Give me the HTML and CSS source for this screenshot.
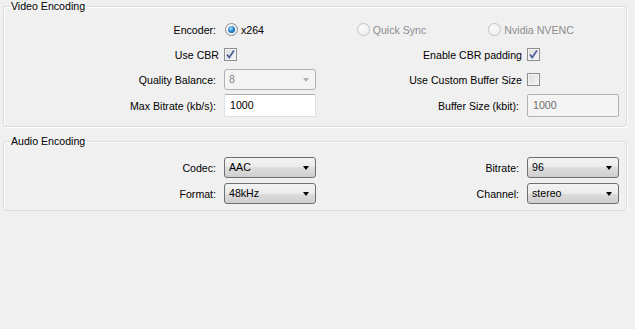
FILE: index.html
```html
<!DOCTYPE html>
<html lang="en">
<head>
    <meta charset="UTF-8">
    <title>Output Settings</title>
    <link rel="stylesheet" href="styles.css">
</head>
<body>
    <!-- Video -->
    <fieldset class="group">
        <legend>Video Encoding</legend>
        <div class="form video-form">
            <div class="label">Encoder:</div>
            <div class="radios">
                <label class="option"><span class="radio checked"></span>x264</label>
                <label class="option disabled"><span class="radio"></span>Quick Sync</label>
                <label class="option disabled"><span class="radio"></span>Nvidia NVENC</label>
            </div>

            <div class="label check-label">Use CBR</div>
            <div class="cell"><span class="checkbox checked"><svg width="11" height="11" viewBox="0 0 11 11"><path d="M2 5.5 L4.2 8.5 L9 1.5" fill="none" stroke="#4a5f97" stroke-width="1.7"/></svg></span></div>
            <div class="label check-label">Enable CBR padding</div>
            <div class="cell"><span class="checkbox checked"><svg width="11" height="11" viewBox="0 0 11 11"><path d="M2 5.5 L4.2 8.5 L9 1.5" fill="none" stroke="#4a5f97" stroke-width="1.7"/></svg></span></div>

            <div class="label">Quality Balance:</div>
            <div class="combo disabled">8</div>
            <div class="label check-label">Use Custom Buffer Size</div>
            <div class="cell"><span class="checkbox"></span></div>

            <div class="label">Max Bitrate (kb/s):</div>
            <div class="input">1000</div>
            <div class="label">Buffer Size (kbit):</div>
            <div class="input disabled">1000</div>
        </div>
    </fieldset>

    <!-- Audio -->
    <fieldset class="group audio">
        <legend>Audio Encoding</legend>
        <div class="form audio-form">
            <div class="label">Codec:</div>
            <div class="combo">AAC</div>
            <div class="label">Bitrate:</div>
            <div class="combo">96</div>

            <div class="label">Format:</div>
            <div class="combo">48kHz</div>
            <div class="label">Channel:</div>
            <div class="combo">stereo</div>
        </div>
    </fieldset>
</body>
</html>
```

FILE: styles.css
```css
body {
    margin: 0;
    background-color: #f0f0f0;
    font-family: "Liberation Sans", Arial, sans-serif;
    font-size: 10.6px;
    color: #000;
}

.group {
    width: 622px;
    margin: 0 0 0 3px;
    padding: 0;
    border: 1px solid #d5dfe5;
    border-radius: 3px;
    box-shadow: inset 1px 1px 0 #fff, 1px 1px 0 #fff;
}

.group legend {
    margin-left: 6px;
    padding: 0 1px;
    line-height: 13px;
}

.group.audio {
    margin-top: 8px;
}

.form {
    display: grid;
    grid-template-columns: 220px 92px 211px 92px;
    row-gap: 4px;
    align-items: center;
}

.video-form {
    grid-template-rows: 21px 21px 21px 23px;
    padding: 6px 0 9px;
}

.audio-form {
    grid-template-rows: 21px 21px;
    row-gap: 5px;
    padding: 9px 0 6px;
}

.label {
    text-align: right;
    padding-right: 8px;
    white-space: nowrap;
}

.label.check-label {
    padding-right: 5px;
}

.cell {
    display: flex;
    align-items: center;
}

/* radio buttons */
.radios {
    grid-column: span 3;
    display: grid;
    grid-template-columns: 1fr 1fr 1fr;
}

.option {
    display: flex;
    align-items: center;
    gap: 3px;
    padding-left: 1px;
}

.option.disabled {
    color: #8d8d8d;
}

.radio {
    position: relative;
    width: 11px;
    height: 11px;
    border: 1px solid #8f8f8f;
    border-radius: 50%;
    background: radial-gradient(circle at 40% 40%, #ffffff, #e2e2e2);
}

.option.disabled .radio {
    border-color: #c4c4c4;
    background: radial-gradient(circle at 40% 40%, #fafafa, #ececec);
}

.radio.checked::after {
    content: "";
    position: absolute;
    left: 2px;
    top: 2px;
    width: 7px;
    height: 7px;
    border-radius: 50%;
    background: radial-gradient(circle at 40% 35%, #a9e0ff 0, #2e8bd2 45%, #0b4a86 100%);
}

/* checkboxes */
.checkbox {
    display: flex;
    align-items: center;
    justify-content: center;
    width: 11px;
    height: 11px;
    border: 1px solid #8f8f8f;
    background: linear-gradient(135deg, #dcdcdc, #f6f6f6);
    box-shadow: inset 0 0 0 1px #f4f4f4;
}

/* combo boxes */
.combo {
    position: relative;
    height: 21px;
    box-sizing: border-box;
    padding: 0 4px;
    line-height: 19px;
    border: 1px solid #707070;
    border-radius: 3px;
    background: linear-gradient(#f3f3f3, #ebebeb 50%, #dddddd 50%, #cfcfcf);
}

.combo::after {
    content: "";
    position: absolute;
    right: 6px;
    top: 8px;
    border-left: 3.5px solid transparent;
    border-right: 3.5px solid transparent;
    border-top: 4px solid #000;
}

.combo.disabled {
    color: #838383;
    border-color: #adb2b5;
    background: #f4f4f4;
}

.combo.disabled::after {
    border-top-color: #b0b0b0;
}

/* text inputs */
.input {
    height: 23px;
    box-sizing: border-box;
    padding: 0 5px;
    line-height: 21px;
    background-color: #fff;
    border: 1px solid #dbdfe6;
    border-top-color: #abadb3;
    border-radius: 2px;
}

.input.disabled {
    color: #6d6d6d;
    background-color: #f4f4f4;
    border-color: #adb2b5;
}
```
